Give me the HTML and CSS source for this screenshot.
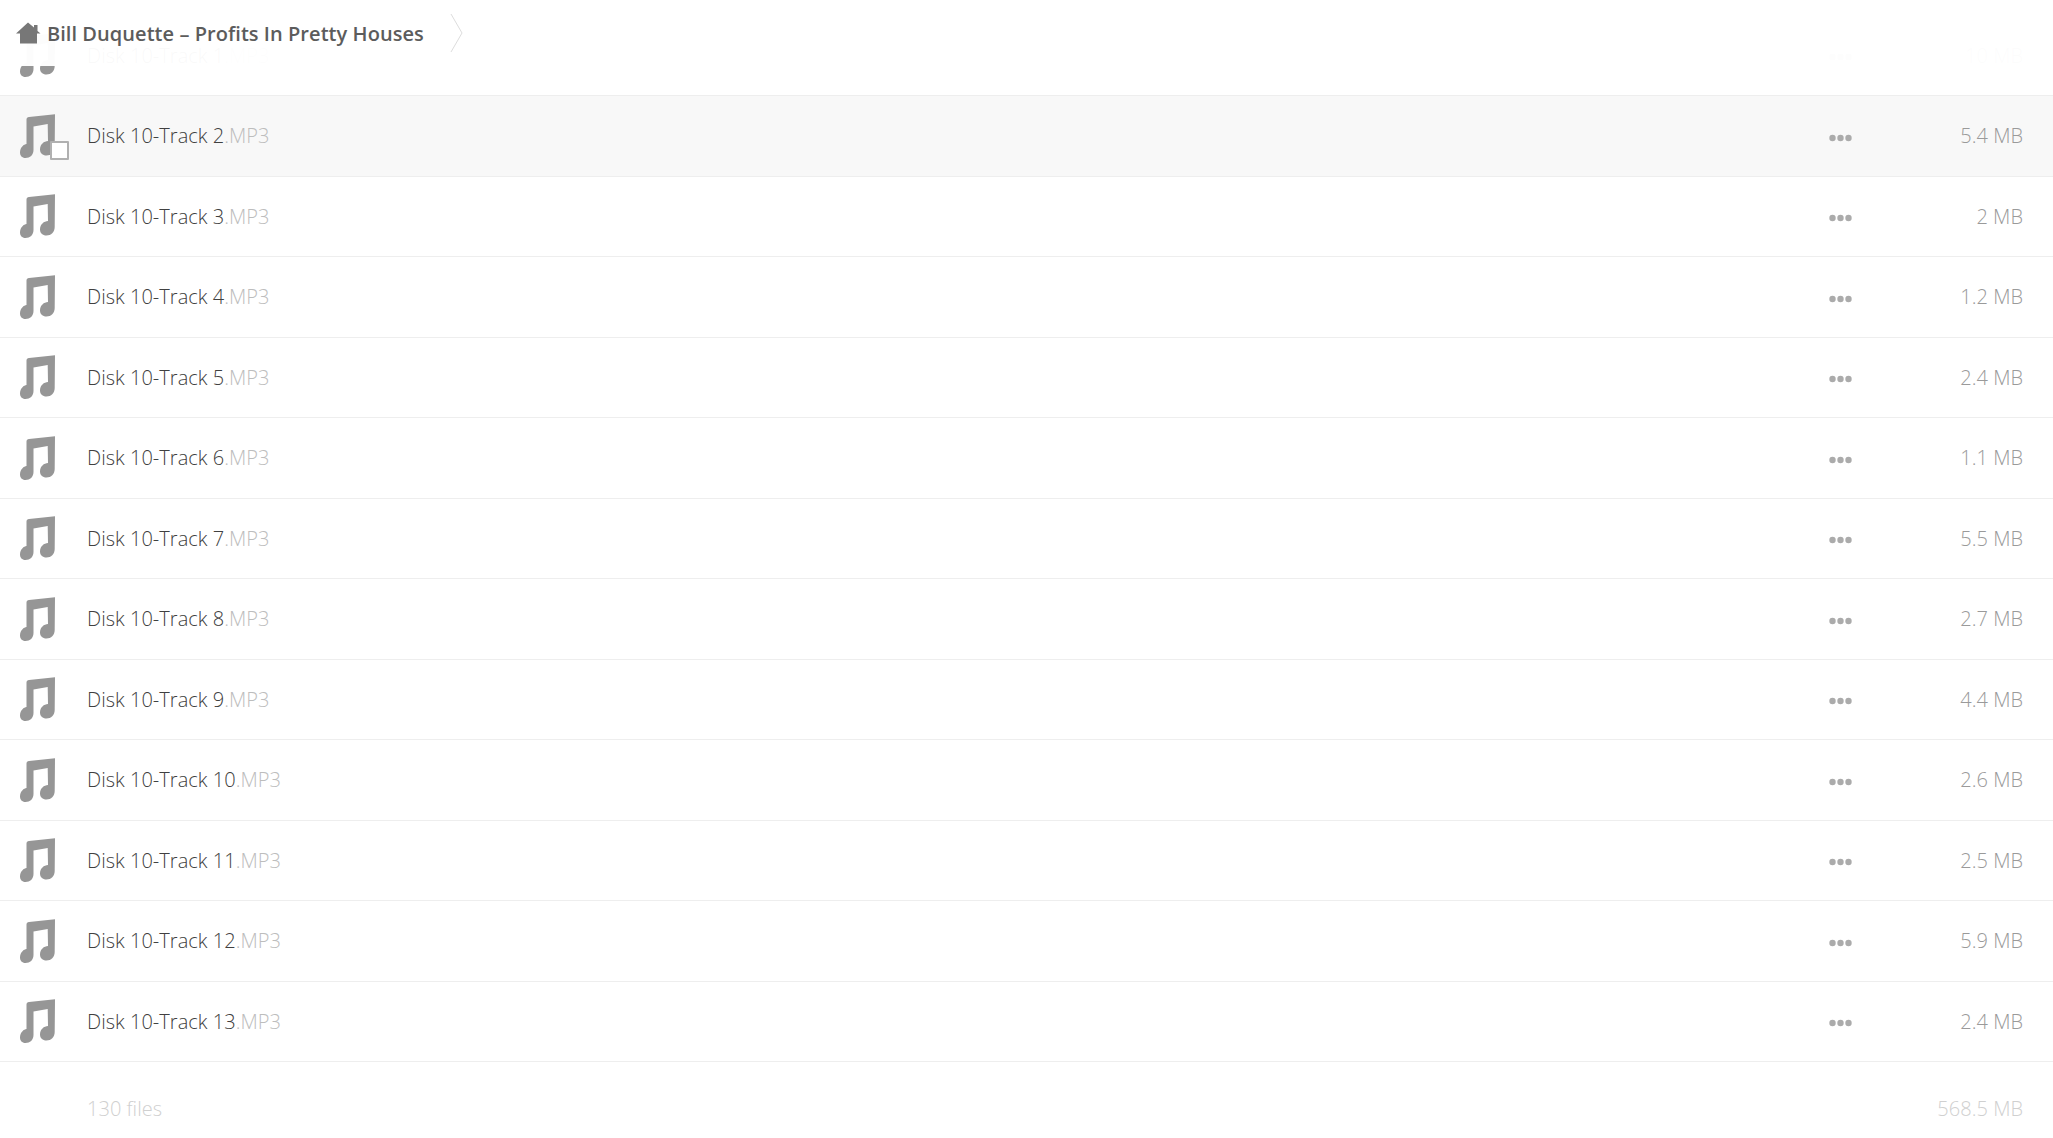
FILE: index.html
```html
<!DOCTYPE html>
<html lang="en">
<head>
    <meta charset="UTF-8">
    <title>Bill Duquette – Profits In Pretty Houses</title>
    <link rel="stylesheet" href="styles.css">
</head>
<body>

<svg class="defs" width="0" height="0">
    <symbol id="note" viewBox="0 0 35 44">
        <path d="M35 0.3 L34.700 33 C34.700 38 31 41.500 26.500 41.500 C22.500 41.500 20 39 20 35.500 C20 30.500 24 27 28 27 L27.700 10 L13.500 12.500 L13.500 36 C13.500 41 10 44 5.500 44 C2 44 0 41.500 0 38.500 C0 33.500 4 30 6.500 30 L6.500 5.500 C6.500 4 7.500 3.200 9 3 Z"/>
    </symbol>
    <symbol id="dots" viewBox="0 0 23 8">
        <circle cx="3.500" cy="4" r="3.200"/>
        <circle cx="11.500" cy="4" r="3.200"/>
        <circle cx="19.500" cy="4" r="3.200"/>
    </symbol>
</svg>

<div class="crumbs">
    <svg class="home" viewBox="0 0 25 22"><path d="M12 0.500 L18 5.500 V3 H21.500 V9 L24.500 11.500 H21 V21.500 H4 V11.500 H0 Z"/></svg>
    <span class="crumb-name">Bill Duquette – Profits In Pretty Houses</span>
    <svg class="crumb-sep" viewBox="0 0 14 40"><path d="M1 1 L12 20 L1 39"/></svg>
</div>

<div class="list">
    <div class="file">
        <svg class="note"><use href="#note"/></svg>
        <span class="name">Disk 10-Track 1<span class="ext">.MP3</span></span>
        <svg class="dots"><use href="#dots"/></svg>
        <span class="size">10 MB</span>
    </div>
    <div class="file hover">
        <span class="thumb">
            <svg class="note"><use href="#note"/></svg>
            <span class="check"></span>
        </span>
        <span class="name">Disk 10-Track 2<span class="ext">.MP3</span></span>
        <svg class="dots"><use href="#dots"/></svg>
        <span class="size">5.4 MB</span>
    </div>
    <div class="file">
        <svg class="note"><use href="#note"/></svg>
        <span class="name">Disk 10-Track 3<span class="ext">.MP3</span></span>
        <svg class="dots"><use href="#dots"/></svg>
        <span class="size">2 MB</span>
    </div>
    <div class="file">
        <svg class="note"><use href="#note"/></svg>
        <span class="name">Disk 10-Track 4<span class="ext">.MP3</span></span>
        <svg class="dots"><use href="#dots"/></svg>
        <span class="size">1.2 MB</span>
    </div>
    <div class="file">
        <svg class="note"><use href="#note"/></svg>
        <span class="name">Disk 10-Track 5<span class="ext">.MP3</span></span>
        <svg class="dots"><use href="#dots"/></svg>
        <span class="size">2.4 MB</span>
    </div>
    <div class="file">
        <svg class="note"><use href="#note"/></svg>
        <span class="name">Disk 10-Track 6<span class="ext">.MP3</span></span>
        <svg class="dots"><use href="#dots"/></svg>
        <span class="size">1.1 MB</span>
    </div>
    <div class="file">
        <svg class="note"><use href="#note"/></svg>
        <span class="name">Disk 10-Track 7<span class="ext">.MP3</span></span>
        <svg class="dots"><use href="#dots"/></svg>
        <span class="size">5.5 MB</span>
    </div>
    <div class="file">
        <svg class="note"><use href="#note"/></svg>
        <span class="name">Disk 10-Track 8<span class="ext">.MP3</span></span>
        <svg class="dots"><use href="#dots"/></svg>
        <span class="size">2.7 MB</span>
    </div>
    <div class="file">
        <svg class="note"><use href="#note"/></svg>
        <span class="name">Disk 10-Track 9<span class="ext">.MP3</span></span>
        <svg class="dots"><use href="#dots"/></svg>
        <span class="size">4.4 MB</span>
    </div>
    <div class="file">
        <svg class="note"><use href="#note"/></svg>
        <span class="name">Disk 10-Track 10<span class="ext">.MP3</span></span>
        <svg class="dots"><use href="#dots"/></svg>
        <span class="size">2.6 MB</span>
    </div>
    <div class="file">
        <svg class="note"><use href="#note"/></svg>
        <span class="name">Disk 10-Track 11<span class="ext">.MP3</span></span>
        <svg class="dots"><use href="#dots"/></svg>
        <span class="size">2.5 MB</span>
    </div>
    <div class="file">
        <svg class="note"><use href="#note"/></svg>
        <span class="name">Disk 10-Track 12<span class="ext">.MP3</span></span>
        <svg class="dots"><use href="#dots"/></svg>
        <span class="size">5.9 MB</span>
    </div>
    <div class="file">
        <svg class="note"><use href="#note"/></svg>
        <span class="name">Disk 10-Track 13<span class="ext">.MP3</span></span>
        <svg class="dots"><use href="#dots"/></svg>
        <span class="size">2.4 MB</span>
    </div>
    <div class="summary">
        <span class="summary-count">130 files</span>
        <span class="summary-size">568.5 MB</span>
    </div>
</div>

</body>
</html>
```

FILE: styles.css
```css
html, body {
    height: 100%;
}
body {
    margin: 0;
    overflow: hidden;
    background: #fff;
    font-family: "Open Sans", sans-serif;
    font-weight: 300;
    font-size: 20px;
    letter-spacing: 0.03px;
    color: #555;
}
.defs {
    display: block;
}
.crumbs {
    position: absolute;
    top: 0;
    left: 0;
    right: 0;
    height: 66px;
    display: flex;
    align-items: center;
    padding-left: 16px;
    background: rgba(255, 255, 255, 0.97);
}
.home {
    width: 25px;
    height: 22px;
    fill: #777;
}
.crumb-name {
    margin-left: 6px;
    font-weight: 600;
    letter-spacing: 0.05px;
    color: #5c5c5c;
}
.crumb-sep {
    width: 14px;
    height: 40px;
    margin-left: 26px;
    fill: none;
    stroke: #ddd;
}
.list {
    padding-top: 15.500px;
}
.file {
    box-sizing: border-box;
    height: 80.500px;
    display: flex;
    align-items: center;
    padding-left: 20px;
    padding-right: 30px;
    border-bottom: 1px solid #eee;
    color: #404040;
}
.hover {
    background: #f8f8f8;
}
.thumb {
    position: relative;
    display: flex;
}
.note {
    width: 35px;
    height: 44px;
    fill: #969696;
}
.check {
    position: absolute;
    left: 30px;
    top: 27px;
    box-sizing: border-box;
    width: 19px;
    height: 19px;
    border: 2px solid #b0b0b0;
    border-radius: 1px;
    background: #fff;
}
.name {
    margin-left: 32px;
    flex: 1;
}
.ext {
    color: #bdbdbd;
}
.dots {
    width: 23px;
    height: 8px;
    margin-top: 4px;
    fill: #ababab;
}
.size {
    width: 171px;
    text-align: right;
    color: #9a9a9a;
}
.summary {
    height: 92px;
    display: flex;
    align-items: center;
    justify-content: space-between;
    padding-left: 87px;
    padding-right: 30px;
    color: #d0d0d0;
}
```
